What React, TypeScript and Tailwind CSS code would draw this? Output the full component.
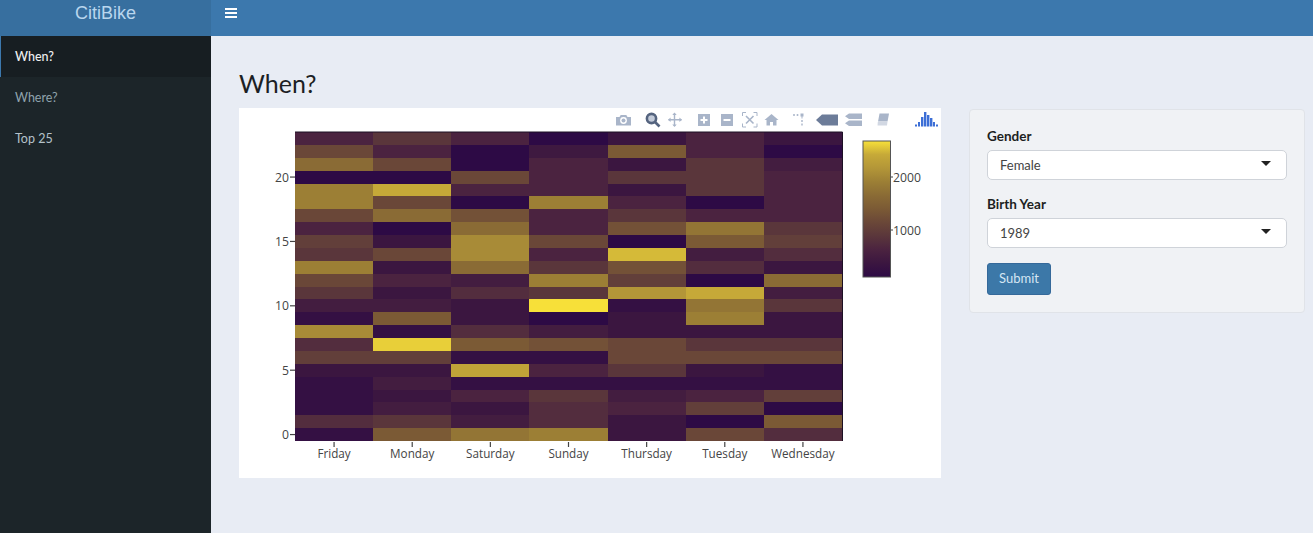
const days = ['Friday', 'Monday', 'Saturday', 'Sunday', 'Thursday', 'Tuesday', 'Wednesday']

// hour 23 first, values on a 0-10 scale
const rows = [
  [2, 3, 2, 0, 1, 2, 1],
  [4, 2, 0, 1.2, 5, 2, 0],
  [6, 4, 0, 2, 1, 3, 1.5],
  [0, 0, 4, 2, 3, 3, 2],
  [7, 9, 2, 2, 1, 3, 2],
  [7, 4, 0, 7, 2, 0, 2],
  [4, 6, 4.5, 2, 3, 2, 2],
  [2, 0, 6, 2, 4.5, 6.5, 3],
  [3.5, 1, 7.5, 4, 0, 5, 3.5],
  [3, 4, 7.5, 2, 9.3, 1.5, 2.5],
  [7, 1, 6, 3, 4.5, 2.5, 1],
  [4, 2, 1.5, 7, 3.5, 0, 6],
  [3, 1, 2.5, 3, 8, 9, 1.5],
  [1.5, 1.5, 1, 10, 0.5, 6.5, 3],
  [0.5, 5, 1, 0, 1, 7, 1],
  [7.5, 0.5, 2.5, 1.5, 1, 1, 1],
  [2.5, 9.7, 5, 4.5, 4, 3, 3],
  [3.5, 3.5, 0.5, 0.5, 4, 4, 4],
  [1, 1, 8.7, 2, 3, 1, 0.5],
  [0.5, 1.5, 0.5, 0.5, 0.5, 0.5, 0.5],
  [0.5, 1, 2, 3, 1.5, 2, 3.5],
  [0.5, 1.5, 1, 2.5, 2, 3.5, 0],
  [2.5, 3, 1.5, 2.5, 1, 0, 5],
  [0.5, 5, 6.5, 7, 1, 4, 2.5],
]

const stops = [
  [45, 10, 69],
  [59, 22, 64],
  [75, 35, 64],
  [90, 54, 59],
  [106, 71, 56],
  [123, 90, 53],
  [138, 107, 53],
  [156, 127, 53],
  [179, 150, 56],
  [198, 169, 56],
  [247, 224, 57],
]

function shade(v: number) {
  const lo = Math.min(Math.floor(v), 9)
  const t = v - lo
  const c = stops[lo].map((n, i) => Math.round(n + (stops[lo + 1][i] - n) * t))
  return `rgb(${c[0]},${c[1]},${c[2]})`
}

const plotLeft = 295
const plotTop = 132
const cellW = 547 / 7
const cellH = 309 / 24

const Toolbar = () => (
  <g fill="#a9b5c9">
    {/* camera */}
    <path d="M616 117h3.500l1.200-2h5.600l1.200 2h3.500v8.500h-15z" />
    <circle cx="623.500" cy="120.500" r="3.400" fill="#fff" />
    <circle cx="623.500" cy="120.500" r="2" />
    {/* zoom, active */}
    <circle cx="651.500" cy="118.500" r="4.600" fill="#c3cbd9" stroke="#55647f" strokeWidth="2.600" />
    <path d="M655 122l4.500 4.500" stroke="#55647f" strokeWidth="2.600" />
    {/* pan */}
    <path d="M674.500 113.500v12.500M668.500 119.700h13" stroke="#a9b5c9" strokeWidth="1.400" />
    <path d="M674.500 112.500l2.200 2.600h-4.400zM674.500 127l2.200-2.600h-4.400zM668 119.700l2.600-2.200v4.400zM682 119.700l-2.600-2.200v4.400z" />
    {/* zoom in */}
    <path fillRule="evenodd" d="M698 114h12v12h-12zM703 116.500v2.500h-2.500v2h2.500v2.500h2v-2.500h2.500v-2h-2.500v-2.500z" />
    {/* zoom out */}
    <path fillRule="evenodd" d="M721 114h12v12h-12zM723.500 119v2h7v-2z" />
    {/* autoscale */}
    <path
      d="M742.500 116v-3.500h3.500M753.500 112.500h3.500v3.500M757 123.500v3.500h-3.500M746 127h-3.500v-3.500"
      fill="none"
      stroke="#a9b5c9"
      strokeWidth="1"
    />
    <path d="M746 116l7.500 7.500M753.500 116l-7.500 7.500" stroke="#a9b5c9" strokeWidth="1.600" />
    {/* home */}
    <path d="M771.500 114l7 6h-2v5.500h-3.500v-3.500h-3v3.500h-3.500v-5.500h-2z" />
    {/* spikelines */}
    <circle cx="794" cy="115" r="1" />
    <circle cx="797.500" cy="115" r="1" />
    <path d="M800.500 113.500h3v3h-1v2h-1v-2h-1z" />
    <path d="M801.300 120h1.400v2h-1.400zM801.300 123.500h1.400v2h-1.400z" />
    {/* closest data on hover, active */}
    <path d="M816 120l6-5.500h16v11h-16z" fill="#6c7c99" />
    {/* compare data */}
    <path d="M849 113.500h13v5.500h-13l-4-2.700zM849 120.500h13v5.500h-13l-4-2.700z" />
    {/* book */}
    <path d="M879.500 113.500h9.500l-1.500 8h-9.500z" />
    <path d="M877.800 122l9.700-.2-.5 3.700h-9.500z" fill="#d2d8e3" />
    {/* plotly logo bars */}
    <g fill="#3d6fd6">
      <rect x="915" y="124.500" width="2" height="2" />
      <rect x="918" y="122" width="2" height="4.500" />
      <rect x="921" y="117" width="2.400" height="9.500" />
      <rect x="924" y="112" width="2.400" height="14.500" />
      <rect x="927" y="115" width="2.400" height="11.500" />
      <rect x="930" y="118" width="2.400" height="8.500" />
      <rect x="933" y="122" width="2" height="4.500" />
      <rect x="936" y="124.500" width="2" height="2" />
    </g>
  </g>
)

const Heatmap = () => (
  <svg width="702" height="370" viewBox="239 108 702 370" className="block" fontFamily="'Open Sans', sans-serif">
    <defs>
      <linearGradient id="bar" x1="0" y1="1" x2="0" y2="0">
        {stops.map((c, i) => (
          <stop key={i} offset={i / 10} stopColor={`rgb(${c[0]},${c[1]},${c[2]})`} />
        ))}
      </linearGradient>
    </defs>
    <Toolbar />
    <g shapeRendering="crispEdges">
      {rows.map((row, r) =>
        row.map((v, c) => (
          <rect
            key={`${r}-${c}`}
            x={plotLeft + c * cellW}
            y={plotTop + r * cellH}
            width={cellW}
            height={cellH}
            fill={shade(v)}
          />
        )),
      )}
    </g>
    <path d="M295 132h547.500v309" fill="none" stroke="#1c1024" strokeWidth="1" />
    {[0, 5, 10, 15, 20].map((h) => {
      const y = 441 - (h + 0.5) * cellH
      return (
        <g key={h}>
          <path d={`M290 ${y}h5`} stroke="#444" strokeWidth="1.200" />
          <text x="289" y={y + 4.500} textAnchor="end" fontSize="12.200" fill="#444">
            {h}
          </text>
        </g>
      )
    })}
    {days.map((d, i) => {
      const x = plotLeft + (i + 0.5) * cellW
      return (
        <g key={d}>
          <path d={`M${x} 442v5`} stroke="#444" strokeWidth="1.200" />
          <text x={x} y="458" textAnchor="middle" fontSize="11.700" fill="#444">
            {d}
          </text>
        </g>
      )
    })}
    <rect x="863" y="141" width="27.500" height="136" fill="url(#bar)" stroke="#555" strokeWidth="1" />
    <path d="M891 177h2M891 230h2" stroke="#444" strokeWidth="1" />
    <text x="893" y="182" fontSize="12.200" fill="#444">
      2000
    </text>
    <text x="893" y="235" fontSize="12.200" fill="#444">
      1000
    </text>
  </svg>
)

const Field = ({ label, value }: { label: string; value: string }) => (
  <div>
    <div className="mb-[5px] text-[13.5px] font-bold leading-[18px] text-[#1d1f22]">{label}</div>
    <div className="flex h-[30px] items-center justify-between rounded-[5px] border-[1.5px] border-[#cfd3d9] bg-white pl-3 pr-[15px] text-[13px] text-[#444]">
      <span className="pt-[2px]">{value}</span>
      <span className="mb-1 h-0 w-0 border-x-[5px] border-t-[5px] border-x-transparent border-t-[#222]" />
    </div>
  </div>
)

export default function App() {
  return (
    <div className="flex h-[533px] w-[1313px] overflow-hidden bg-[#e8ecf4] font-['Lato',sans-serif]">
      <aside className="flex w-[211px] shrink-0 flex-col bg-[#1c2529]">
        <div className="flex h-9 items-center justify-center bg-[#376f9f] pb-[10px] font-['Liberation_Sans',sans-serif] text-[18px] font-light text-[#b9d6ee]">
          CitiBike
        </div>
        <nav className="text-[12.5px]">
          <div className="flex h-[41px] items-center border-l border-[#3c78ad] bg-[#171e22] pl-[14px] pt-[2px] font-medium text-[#eef0f1]">
            When?
          </div>
          <div className="flex h-[41px] items-center pl-[15px] pt-[2px] text-[#8fa3ad]">Where?</div>
          <div className="flex h-[41px] items-center pl-[15px] pt-[2px] text-[#b4c2c9]">Top 25</div>
        </nav>
      </aside>
      <div className="flex min-w-0 flex-1 flex-col">
        <header className="flex h-9 items-center bg-[#3c78ad] pb-[10px] pl-[14px]">
          <div className="flex h-[10px] w-3 flex-col justify-between">
            <span className="h-[2px] bg-white" />
            <span className="h-[2px] bg-white" />
            <span className="h-[2px] bg-white" />
          </div>
        </header>
        <main className="flex flex-col pl-7 pr-2">
          <h1 className="flex h-[72px] items-end pb-[7px] text-[25px] leading-[36px] text-[#1c1f24]">When?</h1>
          <div className="flex items-start gap-7">
            <div className="bg-white">
              <Heatmap />
            </div>
            <form className="mt-px flex h-[204px] w-[336px] flex-col rounded-[4px] border border-[#e0e3e8] bg-[#f0f2f5] px-[17px] pt-[17px]">
              <div className="flex flex-col gap-[15px]">
                <Field label="Gender" value="Female" />
                <Field label="Birth Year" value="1989" />
              </div>
              <button
                type="button"
                className="mt-[15px] h-[32px] w-[64px] rounded-[3px] border border-[#35699a] bg-[#3c78a8] text-[13px] text-[#d5e6f3]"
              >
                Submit
              </button>
            </form>
          </div>
        </main>
      </div>
    </div>
  )
}
